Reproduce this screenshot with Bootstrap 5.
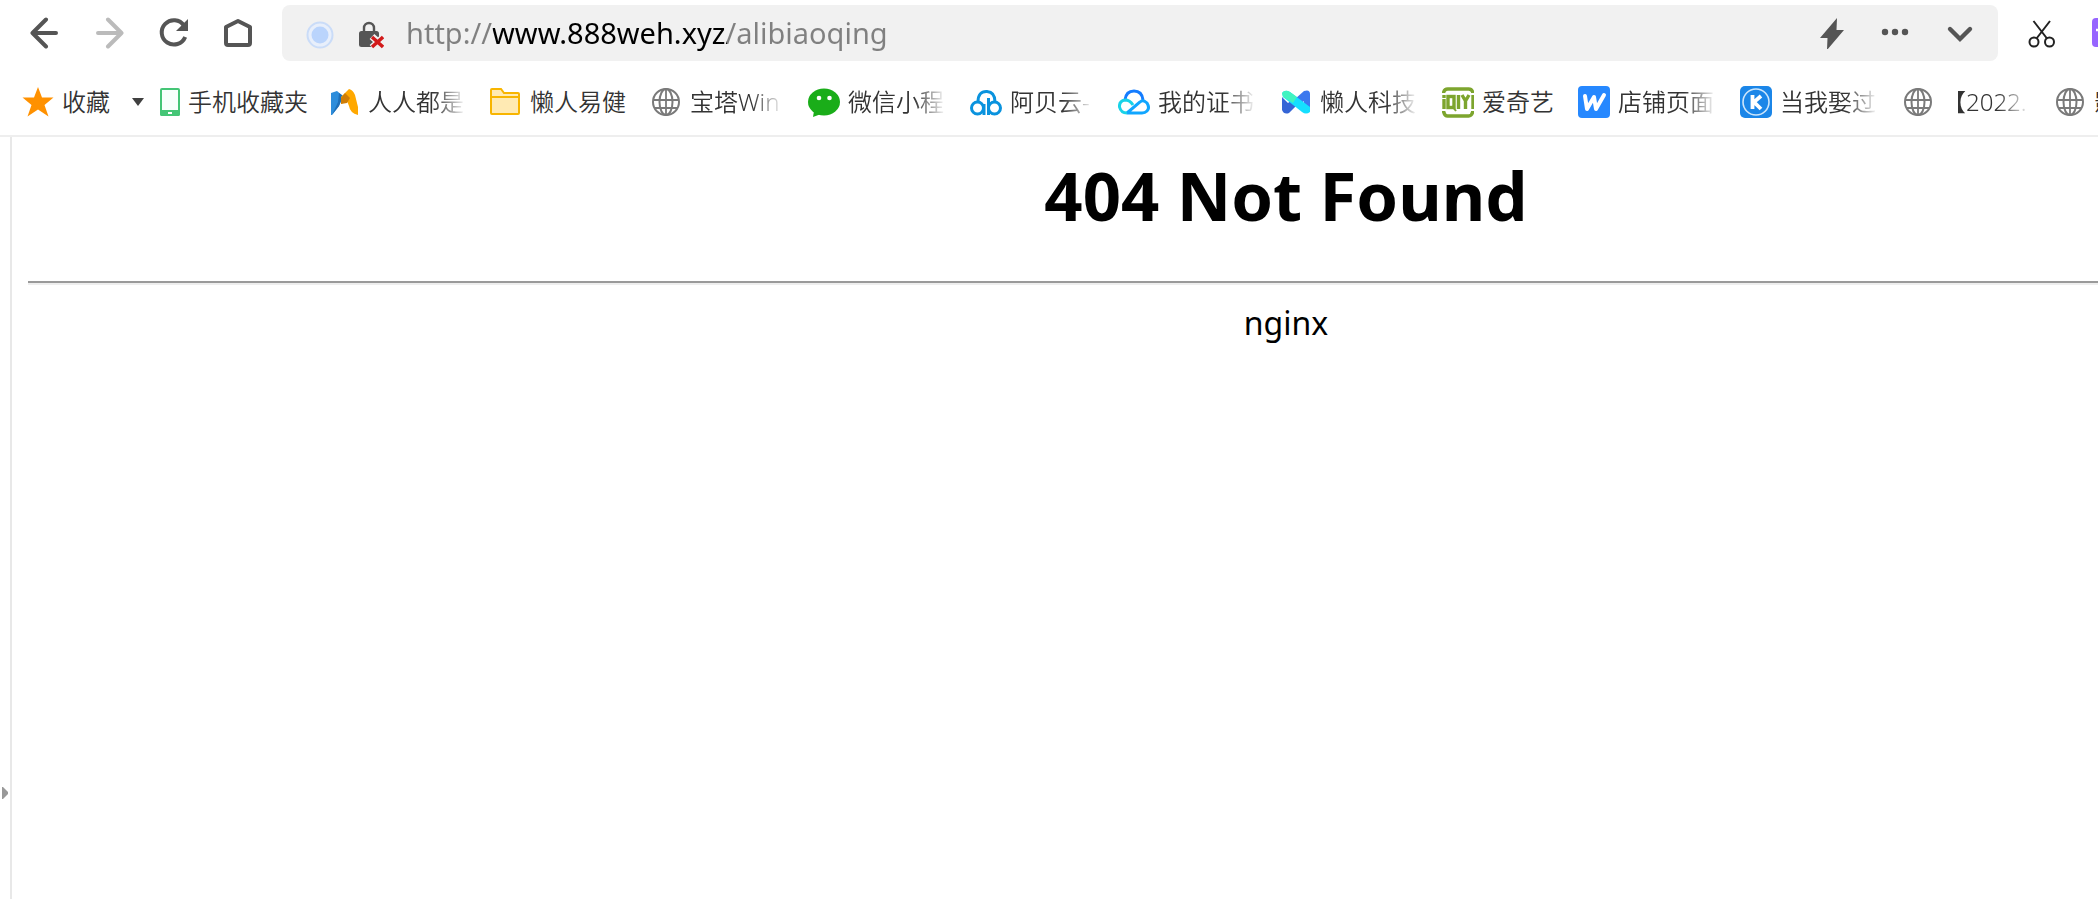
<!DOCTYPE html>
<html lang="zh-CN">
<head>
<meta charset="utf-8">
<meta name="viewport" content="width=device-width, initial-scale=1">
<title>404 Not Found</title>
<link href="https://cdn.jsdelivr.net/npm/bootstrap@5.3.0/dist/css/bootstrap.min.css" rel="stylesheet">
<style>
  body { font-family: "Noto Sans", "Noto Sans CJK SC", sans-serif; color: #000; background: #fff; }
  svg { display: block; flex: none; }
  .tool-row { height: 66px; padding: 5px 0 5px 28px; }
  .icon-btn { width: 32px; height: 32px; padding: 0; border: 0; background: none; color: #555; display: flex; align-items: center; justify-content: center; flex: none; }
  .icon-btn:disabled { color: #bbb; }
  .nav-set { gap: 33px; margin-right: 27px; }
  .address { height: 56px; border-radius: 8px; background: #f1f1f1; padding: 0 22px; min-width: 0; }
  .address input {
    font-size: 29px; line-height: 40px; height: 40px; min-width: 0; padding: 0; margin-left: 22px; border: 0; outline: 0;
    color: transparent; caret-color: #000;
    background: linear-gradient(to right, #808080 87px, #000 87px, #000 321px, #808080 321px);
    -webkit-background-clip: text; background-clip: text;
  }
  .address-end { gap: 32px; }
  .side-tools { width: 100px; padding-left: 28px; gap: 34px; }
  .marks { height: 71px; padding: 2px 0 0 22px; border-bottom: 2px solid #eee; }
  .mark-link { display: flex; align-items: center; gap: 8px; flex: none; height: 40px; margin-right: 24px; padding: 0; border: 0; background: none; color: #333; font-size: 24px; line-height: 36px; font-weight: 350; text-decoration: none; white-space: nowrap; }
  .mark-link:hover { color: #000; }
  .mark-link .cut { width: 98px; -webkit-mask-image: linear-gradient(to left, transparent, #000 32px); mask-image: linear-gradient(to left, transparent, #000 32px); }
  .mark-link .cut-win { width: 94px; }
  .mark-link .cut-year { width: 88px; }
  .mark-link .cut-cloud { width: 84px; }
  .star-link, .phone-link { margin-right: 20px; }
  .caret-btn { width: 16px; margin-right: 14px; }
  .side-strip { width: 12px; border-right: 2px solid #e8e8e8; padding-bottom: 98px; }
  .side-strip button { width: 10px; height: 16px; padding: 0; border: 0; background: none; }
  /* the document is wider than the window and runs past its right edge */
  .document-body { width: calc(100% + 462px); padding: 0 16px; }
  .document-body h1 { font-size: 67px; line-height: 92px; margin: 12px 0 40px; font-weight: 700; }
  .document-body hr { margin: 0 0 16px; border: 0; height: 4px; opacity: 1; border-top: 2px solid #9a9a9a; background: #eee; }
  .document-body p { font-size: 32px; line-height: 44px; margin: 0; }
</style>
</head>
<body>
<svg width="0" height="0" class="position-absolute" aria-hidden="true">
  <symbol id="globe" viewBox="0 0 32 32">
    <g fill="none" stroke="#7a7a7a" stroke-width="2"><circle cx="16" cy="16" r="13"/><ellipse cx="16" cy="16" rx="6.5" ry="13"/><path d="M16 3v26M3 14h26M5 22h22" stroke-width="1.8"/></g>
  </symbol>
</svg>
<div class="d-flex flex-column vh-100 overflow-hidden">
  <header>
    <div class="tool-row d-flex align-items-start overflow-hidden">
      <nav class="nav-set d-flex align-self-center" aria-label="导航">
        <button class="icon-btn" type="button" aria-label="后退"><svg width="32" height="32" fill="none" stroke="currentColor" stroke-width="4" stroke-linecap="round" stroke-linejoin="round"><path d="M28 16H5M18 2.500L4.500 16L18 29.500"/></svg></button>
        <button class="icon-btn" type="button" disabled aria-label="前进"><svg width="32" height="32" fill="none" stroke="currentColor" stroke-width="4" stroke-linecap="round" stroke-linejoin="round"><path d="M5 16h23M15 2.500L28.500 16L15 29.500"/></svg></button>
        <button class="icon-btn" type="button" aria-label="刷新"><svg width="32" height="32"><path d="M26 8.500A12.200 12.200 0 1 0 27.200 20" fill="none" stroke="currentColor" stroke-width="4"/><path d="M30 2v12H18z" fill="currentColor"/></svg></button>
        <button class="icon-btn" type="button" aria-label="主页"><svg width="32" height="32" fill="none" stroke="currentColor" stroke-width="4" stroke-linejoin="round"><path d="M3 10L15 4l12 6V26q0 2-2 2H5q-2 0-2-2z"/></svg></button>
      </nav>
      <form class="address d-flex align-items-center flex-grow-1">
        <button class="icon-btn" type="button" aria-label="浏览模式"><svg width="32" height="32"><circle cx="16" cy="18" r="12.500" fill="#e8effb" stroke="#cadcf8" stroke-width="2"/><circle cx="16" cy="18" r="8.500" fill="#bad4fc"/></svg></button>
        <button class="icon-btn ms-3" type="button" aria-label="不安全"><svg width="32" height="32"><path d="M12 15v-4a5 5 0 0 1 10 0v4" fill="none" stroke="#555" stroke-width="2.400"/><rect x="7" y="14" width="20" height="16" rx="2.500" fill="#555"/><path d="M20 19.500l12 11M32 19.500l-12 11" stroke="#f1f1f1" stroke-width="7"/><path d="M20 20l11 10M31 20l-11 10" stroke="#d21a1a" stroke-width="3.400"/></svg></button>
        <input class="flex-grow-1" type="text" aria-label="地址" value="http://www.888weh.xyz/alibiaoqing" spellcheck="false">
        <div class="address-end d-flex">
          <button class="icon-btn" type="button" aria-label="极速模式"><svg width="32" height="32"><path d="M21 1L4 21h7.500L11 33L28 13h-7.500z" fill="currentColor"/></svg></button>
          <button class="icon-btn" type="button" aria-label="更多"><svg width="32" height="32" fill="currentColor"><circle cx="5" cy="15" r="3.200"/><circle cx="15" cy="15" r="3.200"/><circle cx="25" cy="15" r="3.200"/></svg></button>
          <button class="icon-btn" type="button" aria-label="展开"><svg width="32" height="32" fill="none" stroke="currentColor" stroke-width="4.400" stroke-linecap="round"><path d="M6 12l10 10l10-10"/></svg></button>
        </div>
      </form>
      <div class="side-tools d-flex align-self-center flex-shrink-0 overflow-hidden">
        <button class="icon-btn" type="button" aria-label="截图"><svg width="32" height="32" fill="none" stroke="#222" stroke-width="2"><circle cx="8" cy="25" r="4.500"/><circle cx="23.500" cy="25" r="4.500"/><path d="M7.500 4l13.500 17.500M24 4L10.500 21.500"/></svg></button>
        <button class="icon-btn" type="button" aria-label="扩展"><svg width="32" height="32"><rect y="1" width="32" height="29" rx="4" fill="#9765ff"/><path d="M4 13h20M6 7h18" stroke="#fff" stroke-width="2.400"/></svg></button>
      </div>
    </div>
    <nav class="marks d-flex align-items-center overflow-hidden" aria-label="收藏栏">
      <a class="mark-link star-link" href="#"><svg width="32" height="32"><path d="M16 1l4 10.500h11.500l-9 7.500l4 11.500L16 23.500L5.500 30.500l4-11.500l-9-7.500H12z" fill="#ff9100"/></svg><span>收藏</span></a>
      <button class="icon-btn caret-btn" type="button" aria-label="收藏菜单"><svg width="16" height="16"><path d="M2 4h12L8 12z" fill="#404040"/></svg></button>
      <a class="mark-link phone-link" href="#"><svg width="20" height="32"><rect x="1" y="3" width="18" height="26" rx="1" fill="#f8fffb" stroke="#45c576" stroke-width="2"/><path d="M0 24h20v4q0 2-2 2H2q-2 0-2-2z" fill="#45c576"/><path d="M8 26h4v2H8z" fill="#fff"/></svg><span>手机收藏夹</span></a>
      <a class="mark-link" href="#"><svg width="32" height="32"><path d="M3 7L9 5l6 5l-4 10l-7 9H3z" fill="#2d8ddb"/><path d="M11 7l4 3l-4 10l-7 9l6-13z" fill="#1f6fb8"/><path d="M13 11l8-8q4 1 6 6l3 12v8q-8-2-9-9l-2-5l-6 3z" fill="#ffa800"/><path d="M13 12l4-5l5 5l-3 5l-6 1z" fill="#cf7d06"/></svg><span class="cut">人人都是</span></a>
      <a class="mark-link" href="#"><svg width="32" height="32"><path d="M1 27V4q0-1 1-1h9l3 4h14q1 0 1 1v19q0 1-1 1H2q-1 0-1-1z" fill="#ffeab3" stroke="#f8b500" stroke-width="2"/><path d="M1 11h28" stroke="#f8b500" stroke-width="2"/></svg><span>懒人易健</span></a>
      <a class="mark-link" href="#"><svg width="32" height="32"><use href="#globe"/></svg><span class="cut cut-win">宝塔Win</span></a>
      <a class="mark-link" href="#"><svg width="32" height="32"><ellipse cx="16" cy="16" rx="16" ry="13.500" fill="#1aad19"/><path d="M6 25l-1 6l8-3z" fill="#1aad19"/><circle cx="11" cy="12" r="2.300" fill="#fff"/><circle cx="21.500" cy="12" r="2.300" fill="#fff"/></svg><span class="cut">微信小程</span></a>
      <a class="mark-link" href="#"><svg width="32" height="32" fill="none" stroke="#0a93de" stroke-width="3"><circle cx="7.500" cy="22" r="6"/><circle cx="24.500" cy="22" r="6"/><path d="M8 16Q8 5 17 5.500Q25 6 25 16M18.500 12v17M14 18v11"/></svg><span class="cut cut-cloud">阿贝云-</span></a>
      <a class="mark-link" href="#"><svg width="32" height="32" fill="none" stroke-width="3"><path d="M7 14Q8 5 16 5Q24 5 25 14" stroke="#147cff"/><path d="M9 27L22 16Q25 13 29 17Q32 22 29 25Q27 27 24 27H9" stroke="#10a6ff"/><path d="M7 14Q1 15 1.500 21Q3 27 9 27M7 14q5 0 8 5" stroke="#19d3e8"/></svg><span class="cut">我的证书</span></a>
      <a class="mark-link" href="#"><svg width="32" height="32"><path d="M2 11v13q2 5 7 3l7-7l-4-6l-4 3z" fill="#3565d6"/><path d="M15 13l9-8q6-2 6 3v17l-6-1v-9l-4 4z" fill="#3b78ee"/><path d="M2 7q3-4 8-1l20 15v5q-4 3-8 0L3 11z" fill="#15dfff"/><path d="M2 7q3-4 8-1l7 5l-4 6l-10-6z" fill="#41f3c0"/></svg><span class="cut">懒人科技</span></a>
      <a class="mark-link" href="#"><svg width="32" height="32" fill="none" stroke="#7da52e" stroke-width="3.400"><path d="M1.700 7V6q1-3 4-3h21q3 0 4 3v1M1.700 25v1q1 4 4 4h21q3 0 4-4v-1"/><path d="M2 9v3M2 13v10M31 9v14M16.500 9v14M20 9l3.500 6L27 9M23.500 15v8"/><rect x="6" y="10.500" width="6" height="11"/><path d="M10 20l4 5" stroke-width="2"/></svg><span>爱奇艺</span></a>
      <a class="mark-link" href="#"><svg width="32" height="32"><rect width="32" height="32" rx="4" fill="#2688ff"/><path d="M7 10l2 13l7-12l2 12L26 9" fill="none" stroke="#fff" stroke-width="4" stroke-linejoin="round" stroke-linecap="round"/></svg><span class="cut">店铺页面</span></a>
      <a class="mark-link" href="#"><svg width="32" height="32"><rect width="32" height="32" rx="5" fill="#1b86e8"/><circle cx="16" cy="16" r="13" fill="none" stroke="#cce5fb" stroke-width="1.600"/><path d="M12.500 9v14M21 10l-7 6l7 7" fill="none" stroke="#fff" stroke-width="3.800"/></svg><span class="cut">当我娶过</span></a>
      <a class="mark-link" href="#"><svg width="32" height="32"><use href="#globe"/></svg><span class="cut cut-year">【2022.</span></a>
      <a class="mark-link" href="#"><svg width="32" height="32"><use href="#globe"/></svg><span>影</span></a>
    </nav>
  </header>
  <div class="d-flex flex-grow-1 overflow-hidden">
    <aside class="side-strip d-flex align-items-end flex-shrink-0"><button type="button" aria-label="展开侧栏"><svg width="10" height="16"><path d="M2 2h1l5 5v2l-5 5H2z" fill="#999"/></svg></button></aside>
    <main class="flex-grow-1 overflow-hidden">
      <div class="document-body text-center">
        <h1>404 Not Found</h1>
        <hr>
        <p>nginx</p>
      </div>
    </main>
  </div>
</div>
<script src="https://cdn.jsdelivr.net/npm/bootstrap@5.3.0/dist/js/bootstrap.bundle.min.js"></script>
</body>
</html>
